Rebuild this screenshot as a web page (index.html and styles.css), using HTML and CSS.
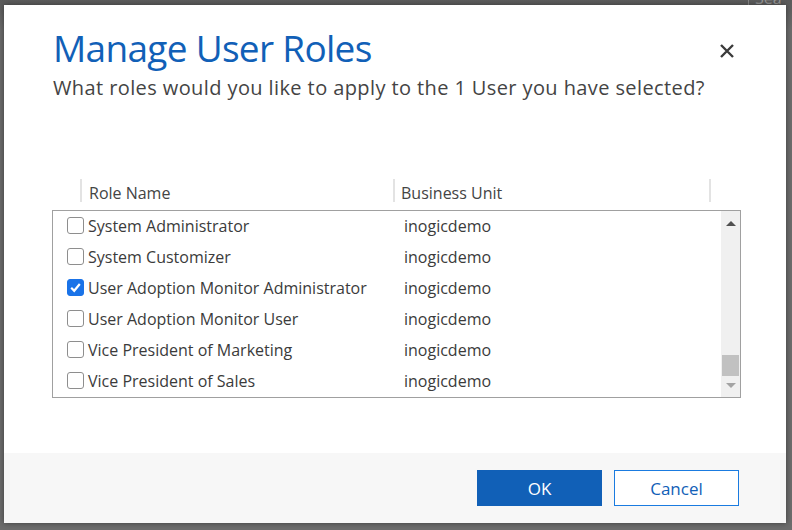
FILE: index.html
```html
<!DOCTYPE html>
<html>
<head>
<meta charset="utf-8">
<link rel="stylesheet" href="styles.css">
</head>
<body>
<div class="backdrop">
  <div class="bg-search">Sea</div>
  <div class="dialog">
    <div class="main">
      <div class="head">
        <div class="titles">
          <h1 class="title">Manage User Roles</h1>
          <p class="subtitle">What roles would you like to apply to the 1 User you have selected?</p>
        </div>
        <button class="close" aria-label="Close">
          <svg width="16" height="16" viewBox="0 0 16 16"><path d="M2 2 L14 14 M14 2 L2 14" stroke="#3b3b3b" stroke-width="2.4" fill="none"/></svg>
        </button>
      </div>
      <div class="grid-head">
        <div class="hcol hcol-role">Role Name</div>
        <div class="hcol hcol-bu">Business Unit</div>
        <div class="hcol-end"></div>
      </div>
      <div class="list">
        <div class="rows">
          <div class="row"><span class="cb"></span><span class="role">System Administrator</span><span class="bu">inogicdemo</span></div>
          <div class="row"><span class="cb"></span><span class="role">System Customizer</span><span class="bu">inogicdemo</span></div>
          <div class="row"><span class="cb checked"><svg width="15" height="15" viewBox="0 0 15 15"><path d="M3.2 7.8 L6.2 10.8 L11.8 4" stroke="#fff" stroke-width="2.2" fill="none"/></svg></span><span class="role">User Adoption Monitor Administrator</span><span class="bu">inogicdemo</span></div>
          <div class="row"><span class="cb"></span><span class="role">User Adoption Monitor User</span><span class="bu">inogicdemo</span></div>
          <div class="row"><span class="cb"></span><span class="role">Vice President of Marketing</span><span class="bu">inogicdemo</span></div>
          <div class="row"><span class="cb"></span><span class="role">Vice President of Sales</span><span class="bu">inogicdemo</span></div>
        </div>
        <div class="scrollbar">
          <span class="arrow up"></span>
          <span class="track"><span class="thumb"></span></span>
          <span class="arrow down"></span>
        </div>
      </div>
    </div>
    <div class="footer">
      <button class="btn btn-ok">OK</button>
      <button class="btn btn-cancel">Cancel</button>
    </div>
  </div>
</div>
</body>
</html>
```
FILE: styles.css
```css
* { box-sizing: border-box; }
html, body { margin: 0; padding: 0; }
body {
  width: 792px;
  height: 530px;
  overflow: hidden;
  background: #6d6d6d;
  font-family: "Open Sans", "Noto Sans", sans-serif;
}
.backdrop {
  position: relative;
  height: 530px;
  padding: 5px 6px 7px 4px;
  background: linear-gradient(#5c5c5c, #6d6d6d 30px);
}
.bg-search {
  position: absolute;
  top: -9px;
  right: 0;
  width: 44px;
  height: 14px;
  border-left: 1px solid #8a8a8a;
  color: #9a9a9a;
  font-size: 16px;
  padding-left: 6px;
  line-height: 14px;
  overflow: hidden;
}
.dialog {
  position: relative;
  height: 518px;
  background: #fff;
  display: flex;
  flex-direction: column;
  box-shadow: 0 0 6px rgba(0,0,0,0.45);
}
.main {
  flex: 1;
  padding: 0 44px 0 48px;
}
.head {
  display: flex;
  justify-content: space-between;
  align-items: flex-start;
}
.title {
  margin: 20px 0 0 1px;
  font-weight: 400;
  font-size: 37px;
  line-height: 46px;
  color: #1160b7;
  letter-spacing: -0.7px;
}
.subtitle {
  margin: 4px 0 0 1px;
  font-size: 20px;
  line-height: 26px;
  color: #444;
  letter-spacing: 0.4px;
  white-space: nowrap;
}
.close {
  margin: 38px 7px 0 0;
  border: 0;
  background: none;
  padding: 0;
  width: 16px;
  height: 16px;
  display: flex;
}
.grid-head {
  margin-top: 78px;
  display: flex;
  height: 23px;
  font-size: 16px;
  color: #444;
  align-items: flex-start;
}
.hcol {
  height: 23px;
  border-left: 2px solid #e3e3e3;
  padding-top: 3px;
  line-height: 22px;
}
.hcol-role { margin-left: 28px; width: 313px; padding-left: 7px; }
.hcol-bu { width: 316px; padding-left: 6px; }
.hcol-end { height: 23px; border-left: 2px solid #e3e3e3; }
.list {
  margin-top: 8px;
  width: 689px;
  height: 188px;
  border: 1px solid #a0a0a0;
  display: flex;
}
.rows { flex: 1; margin-top: -1px; }
.row {
  height: 31px;
  display: flex;
  align-items: center;
  font-size: 16px;
  color: #3b3b3b;
  padding-left: 14px;
}
.cb {
  width: 17px;
  height: 17px;
  border: 1px solid #8e8e8e;
  border-radius: 3px;
  margin-right: 4px;
  margin-top: -1px;
  display: flex;
  align-items: center;
  justify-content: center;
  background: #fff;
  flex: none;
}
.cb.checked {
  background: #1a73e8;
  border-color: #1a73e8;
}
.role { width: 316px; }
.scrollbar {
  width: 19px;
  background: #f0f0f0;
  display: flex;
  flex-direction: column;
  align-items: center;
  padding: 1px 0 0;
}
.arrow {
  width: 0; height: 0;
  border-left: 5px solid transparent;
  border-right: 5px solid transparent;
}
.arrow.up { border-bottom: 5px solid #505050; margin-top: 9px; }
.arrow.down { border-top: 5px solid #a3a3a3; margin-bottom: 9px; }
.track { flex: 1; width: 100%; display: flex; flex-direction: column; justify-content: flex-end; align-items: center; padding-bottom: 7px; }
.thumb { width: 17px; height: 21px; background: #c1c1c1; }
.footer {
  height: 70px;
  background: #f7f7f7;
  display: flex;
  justify-content: flex-end;
  align-items: flex-start;
  padding: 17px 47px 0 0;
  gap: 12px;
}
.btn {
  width: 125px;
  height: 36px;
  font-family: inherit;
  font-size: 17px;
  padding: 0;
  border: 1px solid #0f6cbd;
}
.btn-ok { background: #1160b7; color: #fff; border-color: #1160b7; }
.btn-cancel { background: #fff; color: #1160b7; border-color: #1a7be0; }
```
